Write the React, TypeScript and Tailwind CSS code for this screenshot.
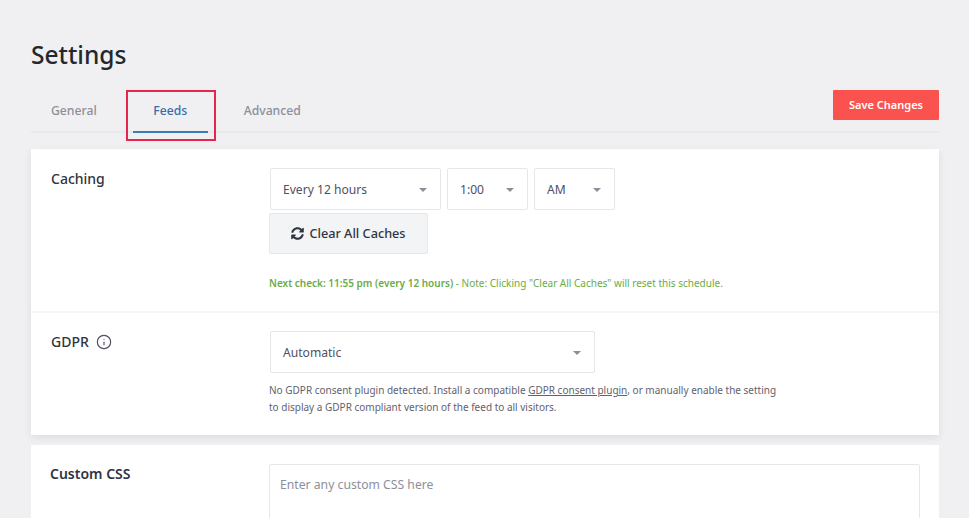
import { FaSyncAlt } from "react-icons/fa";
import { Info } from "lucide-react";

function Select({ label, width }: { label: string; width: string }) {
  return (
    <div className={`flex h-[42px] items-center justify-between rounded-[2px] border border-[#e6e6eb] bg-white pl-3 pr-[13px] text-[12.1px] text-[#50505f] ${width}`}>
      <span className="pt-[2px]">{label}</span>
      <span className="mt-[2px] h-0 w-0 border-x-[4px] border-t-[4px] border-x-transparent border-t-[#8c8f9a]" />
    </div>
  );
}

export default function App() {
  return (
    <div className="h-[518px] overflow-hidden bg-[#f0f0f2] pl-[31px] pr-[30px] pt-[38px] font-['Noto_Sans',sans-serif]">
      <h1 className="text-[24.5px] leading-[33px] font-medium text-[#23282d]">Settings</h1>

      <div className="relative mt-[15px] flex h-[47px] items-start justify-between border-b-2 border-[#e9e9ec]">
        <div className="flex pl-[20px] text-[12.2px] font-medium">
          <div className="h-[47px] pt-[16px] text-[#8c8f9a]">General</div>
          <div className="ml-[36px] flex h-[47px] w-[75px] justify-center border-b-2 border-[#3b7cb5] pt-[16px] text-[#3b6ea5]">Feeds</div>
          <div className="ml-[36px] h-[47px] pt-[16px] text-[#8c8f9a]">Advanced</div>
        </div>
        <button className="mt-[4px] h-[30px] w-[106px] rounded-[1px] bg-[#f9524f] text-[11px] font-semibold text-white">Save Changes</button>
        <div className="absolute left-[95px] top-[4px] h-[51px] w-[90px] border-2 border-[#e8254f]" />
      </div>

      <div className="mt-[16px] bg-white shadow-[0_3px_8px_rgba(0,0,0,0.08)]">
        <div className="flex h-[164px] border-b-2 border-[#f5f5f7] pt-[19px]">
          <div className="w-[239px] pl-[20px] text-[14px] leading-[22px] font-medium text-[#2f3444]">Caching</div>
          <div>
            <div className="flex gap-[6px]">
              <Select label="Every 12 hours" width="w-[171px]" />
              <Select label="1:00" width="w-[81px]" />
              <Select label="AM" width="w-[81px]" />
            </div>
            <button className="-ml-px mt-[3px] flex h-[41px] w-[159px] items-center justify-center gap-[5px] rounded-[2px] border border-[#e6e6eb] bg-[#f3f4f5] text-[12.7px] font-medium text-[#2f3444]">
              <FaSyncAlt size={13} />
              Clear All Caches
            </button>
            <p className="-ml-px mt-[21px] text-[10px] leading-[16px] text-[#6cab46]">
              <span className="font-semibold">Next check: 11:55 pm (every 12 hours)</span> - Note: Clicking "Clear All Caches" will reset this schedule.
            </p>
          </div>
        </div>
        <div className="flex h-[122px] pt-[18px]">
          <div className="flex w-[239px] items-start gap-[7px] pl-[20px] text-[14px] leading-[22px] font-medium text-[#2f3444]">
            GDPR
            <Info size={16} strokeWidth={1.75} className="mt-[3px] text-[#50505f]" />
          </div>
          <div>
            <Select label="Automatic" width="w-[325px]" />
            <p className="-ml-px mt-[9px] w-[515px] text-[10px] leading-[17px] text-[#5f6270]">
              No GDPR consent plugin detected. Install a compatible <span className="underline">GDPR consent plugin</span>, or manually enable the setting to display a GDPR compliant version of the feed to all visitors.
            </p>
          </div>
        </div>
      </div>

      <div className="mt-[10px] flex h-[100px] bg-white pt-[19px]">
        <div className="w-[238px] pl-[19px] text-[14px] leading-[20px] font-semibold text-[#2f3444]">Custom CSS</div>
        <div className="h-[90px] w-[651px] rounded-[2px] border border-[#e6e6eb] px-[10px] pt-[10px] text-[12.2px] leading-[20px] text-[#8c8f9a]">Enter any custom CSS here</div>
      </div>
    </div>
  );
}
